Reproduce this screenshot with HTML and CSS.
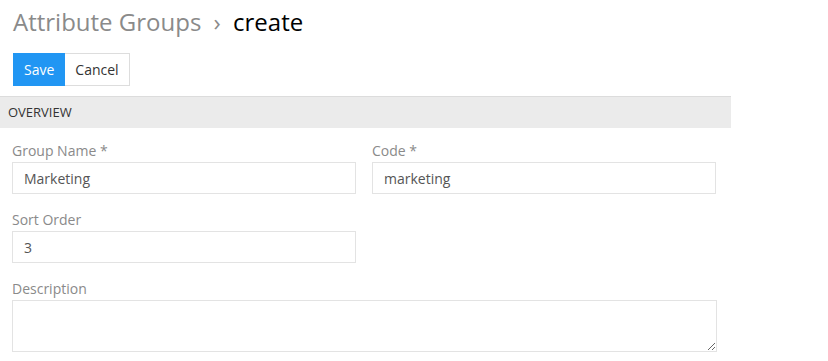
FILE: index.html
```html
<!DOCTYPE html>
<html lang="en">
<head>
  <meta charset="UTF-8" />
  <meta name="viewport" content="width=device-width, initial-scale=1.0"/>
  <title>Attribute Groups | create</title>
  <link rel="stylesheet" href="styles.css">
</head>
<body>
  <div class="page">
    <h1 class="page-title">
      <span class="crumb">Attribute Groups</span>
      <span class="sep">&rsaquo;</span>
      <span class="current">create</span>
    </h1>
    <div class="actions">
      <button type="submit" class="btn btn-primary">Save</button>
      <button type="button" class="btn">Cancel</button>
    </div>
  </div>

  <form class="panel">
    <div class="panel-heading">OVERVIEW</div>
    <div class="panel-body">
      <div class="field">
        <label for="name">Group Name *</label>
        <input type="text" id="name" value="Marketing">
      </div>
      <div class="field">
        <label for="code">Code *</label>
        <input type="text" id="code" value="marketing">
      </div>
      <div class="field">
        <label for="sort">Sort Order</label>
        <input type="text" id="sort" value="3">
      </div>
      <div class="field field-wide">
        <label for="description">Description</label>
        <textarea id="description"></textarea>
      </div>
    </div>
  </form>
</body>
</html>
```

FILE: styles.css
```css
* {
  box-sizing: border-box;
  margin: 0;
  padding: 0;
  font-family: 'Open Sans', sans-serif;
}

body {
  background: #fff;
  color: #333;
}

.page {
  padding: 5px 13px 0;
}

.page-title {
  font-size: 24px;
  font-weight: 400;
  line-height: 33px;
  color: #000;
}

.page-title .crumb {
  color: #8a8a8a;
}

.page-title .sep {
  color: #8a8a8a;
  margin: 0 6px;
}

.actions {
  display: flex;
  margin-top: 15px;
}

.btn {
  height: 33px;
  padding: 0 10px;
  border: 1px solid #ddd;
  background: #fff;
  color: #333;
  font-size: 14px;
  cursor: pointer;
}

.btn + .btn {
  border-left: none;
}

.btn-primary {
  background: #2196f3;
  border-color: #2196f3;
  color: #fff;
}

.panel {
  width: 731px;
  margin-top: 10px;
}

.panel-heading {
  height: 32px;
  line-height: 30px;
  padding: 0 8px;
  background: #ebebeb;
  border-top: 1px solid #dcdcdc;
  font-size: 13px;
  color: #333;
}

.panel-body {
  display: grid;
  grid-template-columns: 344px 344px;
  column-gap: 16px;
  row-gap: 18px;
  padding: 15px 15px 0 12px;
}

.field label {
  display: block;
  height: 19px;
  line-height: 15px;
  font-size: 14px;
  color: #8a8a8a;
}

.field input,
.field textarea {
  display: block;
  width: 100%;
  height: 32px;
  padding: 0 11px;
  border: 1px solid #e3e3e3;
  outline: none;
  font-size: 14px;
  color: #555;
  background: #fff;
}

.field-wide {
  grid-column: 1 / 2;
  width: 705px;
}

.field textarea {
  height: 52px;
  padding: 6px 11px;
}
```
